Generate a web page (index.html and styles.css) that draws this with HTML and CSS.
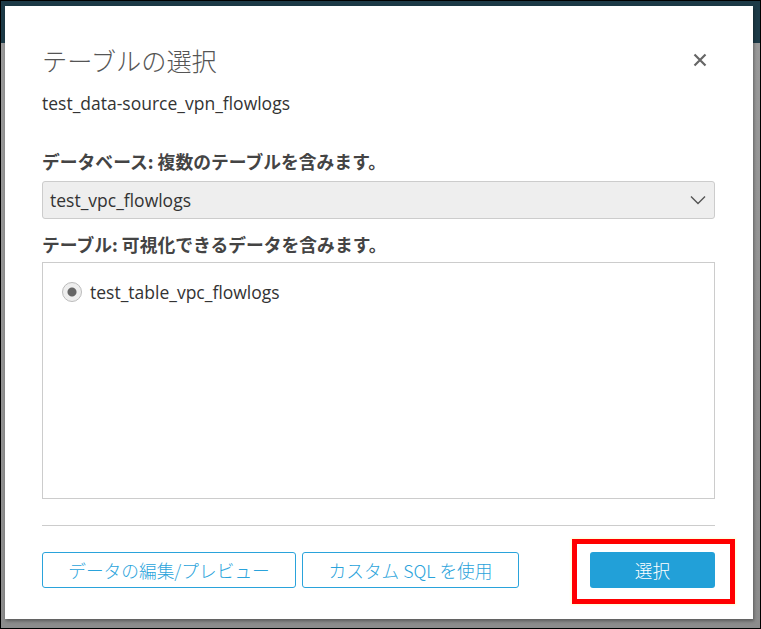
FILE: index.html
```html
<!DOCTYPE html>
<html lang="ja">
<head>
    <meta charset="UTF-8">
    <meta name="viewport" content="width=device-width, initial-scale=1.0">
    <title>テーブルの選択</title>
    <link rel="stylesheet" href="styles.css">
</head>
<body>
    <div class="fondo">
        <div class="modal">
            <div class="modal-cabecera">
                <h2 class="modal-titulo">テーブルの選択</h2>
                <button class="cerrar" aria-label="閉じる">
                    <svg width="14" height="14" viewBox="0 0 14 14"><path d="M1.5 1.5 L12.5 12.5 M12.5 1.5 L1.5 12.5" stroke="#666" stroke-width="2.2" fill="none"/></svg>
                </button>
            </div>
            <p class="origen">test_data-source_vpn_flowlogs</p>

            <div class="etiqueta">データベース: 複数のテーブルを含みます。</div>
            <div class="selector">
                <span>test_vpc_flowlogs</span>
                <svg width="16" height="10" viewBox="0 0 16 10"><path d="M1 1.5 L8 8.5 L15 1.5" stroke="#555" stroke-width="1.4" fill="none"/></svg>
            </div>

            <div class="etiqueta">テーブル: 可視化できるデータを含みます。</div>
            <div class="lista-tablas">
                <label class="fila-radio"><span class="radio"></span>test_table_vpc_flowlogs</label>
            </div>

            <hr class="separador">

            <div class="modal-pie">
                <button class="boton boton-borde">データの編集/プレビュー</button>
                <button class="boton boton-borde">カスタム SQL を使用</button>
                <div class="marcado">
                    <button class="boton boton-primario">選択</button>
                    <span class="recuadro"></span>
                </div>
            </div>
        </div>
    </div>
</body>
</html>
```

FILE: styles.css
```css
* {
    box-sizing: border-box;
}

body {
    margin: 0;
    font-family: "Open Sans", "Noto Sans CJK JP", sans-serif;
    color: #333;
}

.fondo {
    width: 761px;
    height: 629px;
    border: 1px solid #000;
    background: linear-gradient(#1c3a47 0, #1c3a47 42px, #999 42px, #8c8c8c 100%);
    padding: 5px 0 0 4px;
}

.modal {
    width: 748px;
    height: 613px;
    background: #fff;
    box-shadow: 1px 2px 3px rgba(0, 0, 0, 0.35);
    padding: 39px 38px 0 37px;
}

.modal-cabecera {
    height: 30px;
    display: flex;
    align-items: center;
    justify-content: space-between;
}

.modal-titulo {
    margin: 0;
    font-size: 25.2px;
    line-height: 30px;
    font-weight: 300;
    color: #555;
    font-family: "Noto Sans CJK JP", sans-serif;
}

.cerrar {
    background: none;
    border: none;
    padding: 0;
    margin-right: 8px;
    width: 14px;
    height: 14px;
    cursor: pointer;
}

.cerrar svg {
    display: block;
}

.origen {
    margin: 17px 0 0;
    font-size: 17.5px;
    line-height: 22px;
    color: #333;
}

.etiqueta {
    margin-top: 36px;
    font-size: 17.8px;
    line-height: 22px;
    font-weight: bold;
    color: #444;
    font-family: "Noto Sans CJK JP", sans-serif;
}

.selector {
    margin-top: 9px;
    height: 38px;
    background: #eee;
    border: 1px solid #ccc;
    border-radius: 3px;
    display: flex;
    align-items: center;
    justify-content: space-between;
    padding: 0 8px 0 7px;
    font-size: 17.5px;
    color: #333;
}

.selector + .etiqueta {
    margin-top: 14px;
}

.lista-tablas {
    margin-top: 7px;
    height: 237px;
    border: 1px solid #ccc;
    padding: 18px 19px;
}

.fila-radio {
    display: flex;
    align-items: center;
    gap: 8px;
    font-size: 17.5px;
    line-height: 22px;
    color: #333;
}

.radio {
    width: 20px;
    height: 20px;
    border-radius: 50%;
    border: 1px solid #bbb;
    background: radial-gradient(circle, #666 0, #666 4px, #eee 5px);
}

.separador {
    margin: 26px 0 0;
    border: none;
    border-top: 1px solid #ccc;
}

.modal-pie {
    margin-top: 26px;
    display: flex;
    gap: 6px;
}

.boton {
    height: 36px;
    border-radius: 3px;
    font-family: "Noto Sans CJK JP", sans-serif;
    font-size: 17.7px;
    font-weight: 300;
    cursor: pointer;
}

.boton-borde {
    background: #fff;
    border: 1px solid #2aa3db;
    color: #2aa3db;
}

.boton-borde:first-child {
    width: 254px;
}

.boton-borde:nth-child(2) {
    width: 217px;
}

.marcado {
    position: relative;
    margin-left: auto;
}

.boton-primario {
    width: 125px;
    background: #22a0d8;
    border: none;
    color: #fff;
}

/* recuadro rojo de la captura */
.recuadro {
    position: absolute;
    left: -18px;
    right: -20px;
    top: -13px;
    bottom: -16px;
    border: 5px solid #f00;
    box-shadow: 0 0 2px 1px #ffffd0;
    pointer-events: none;
}
```
